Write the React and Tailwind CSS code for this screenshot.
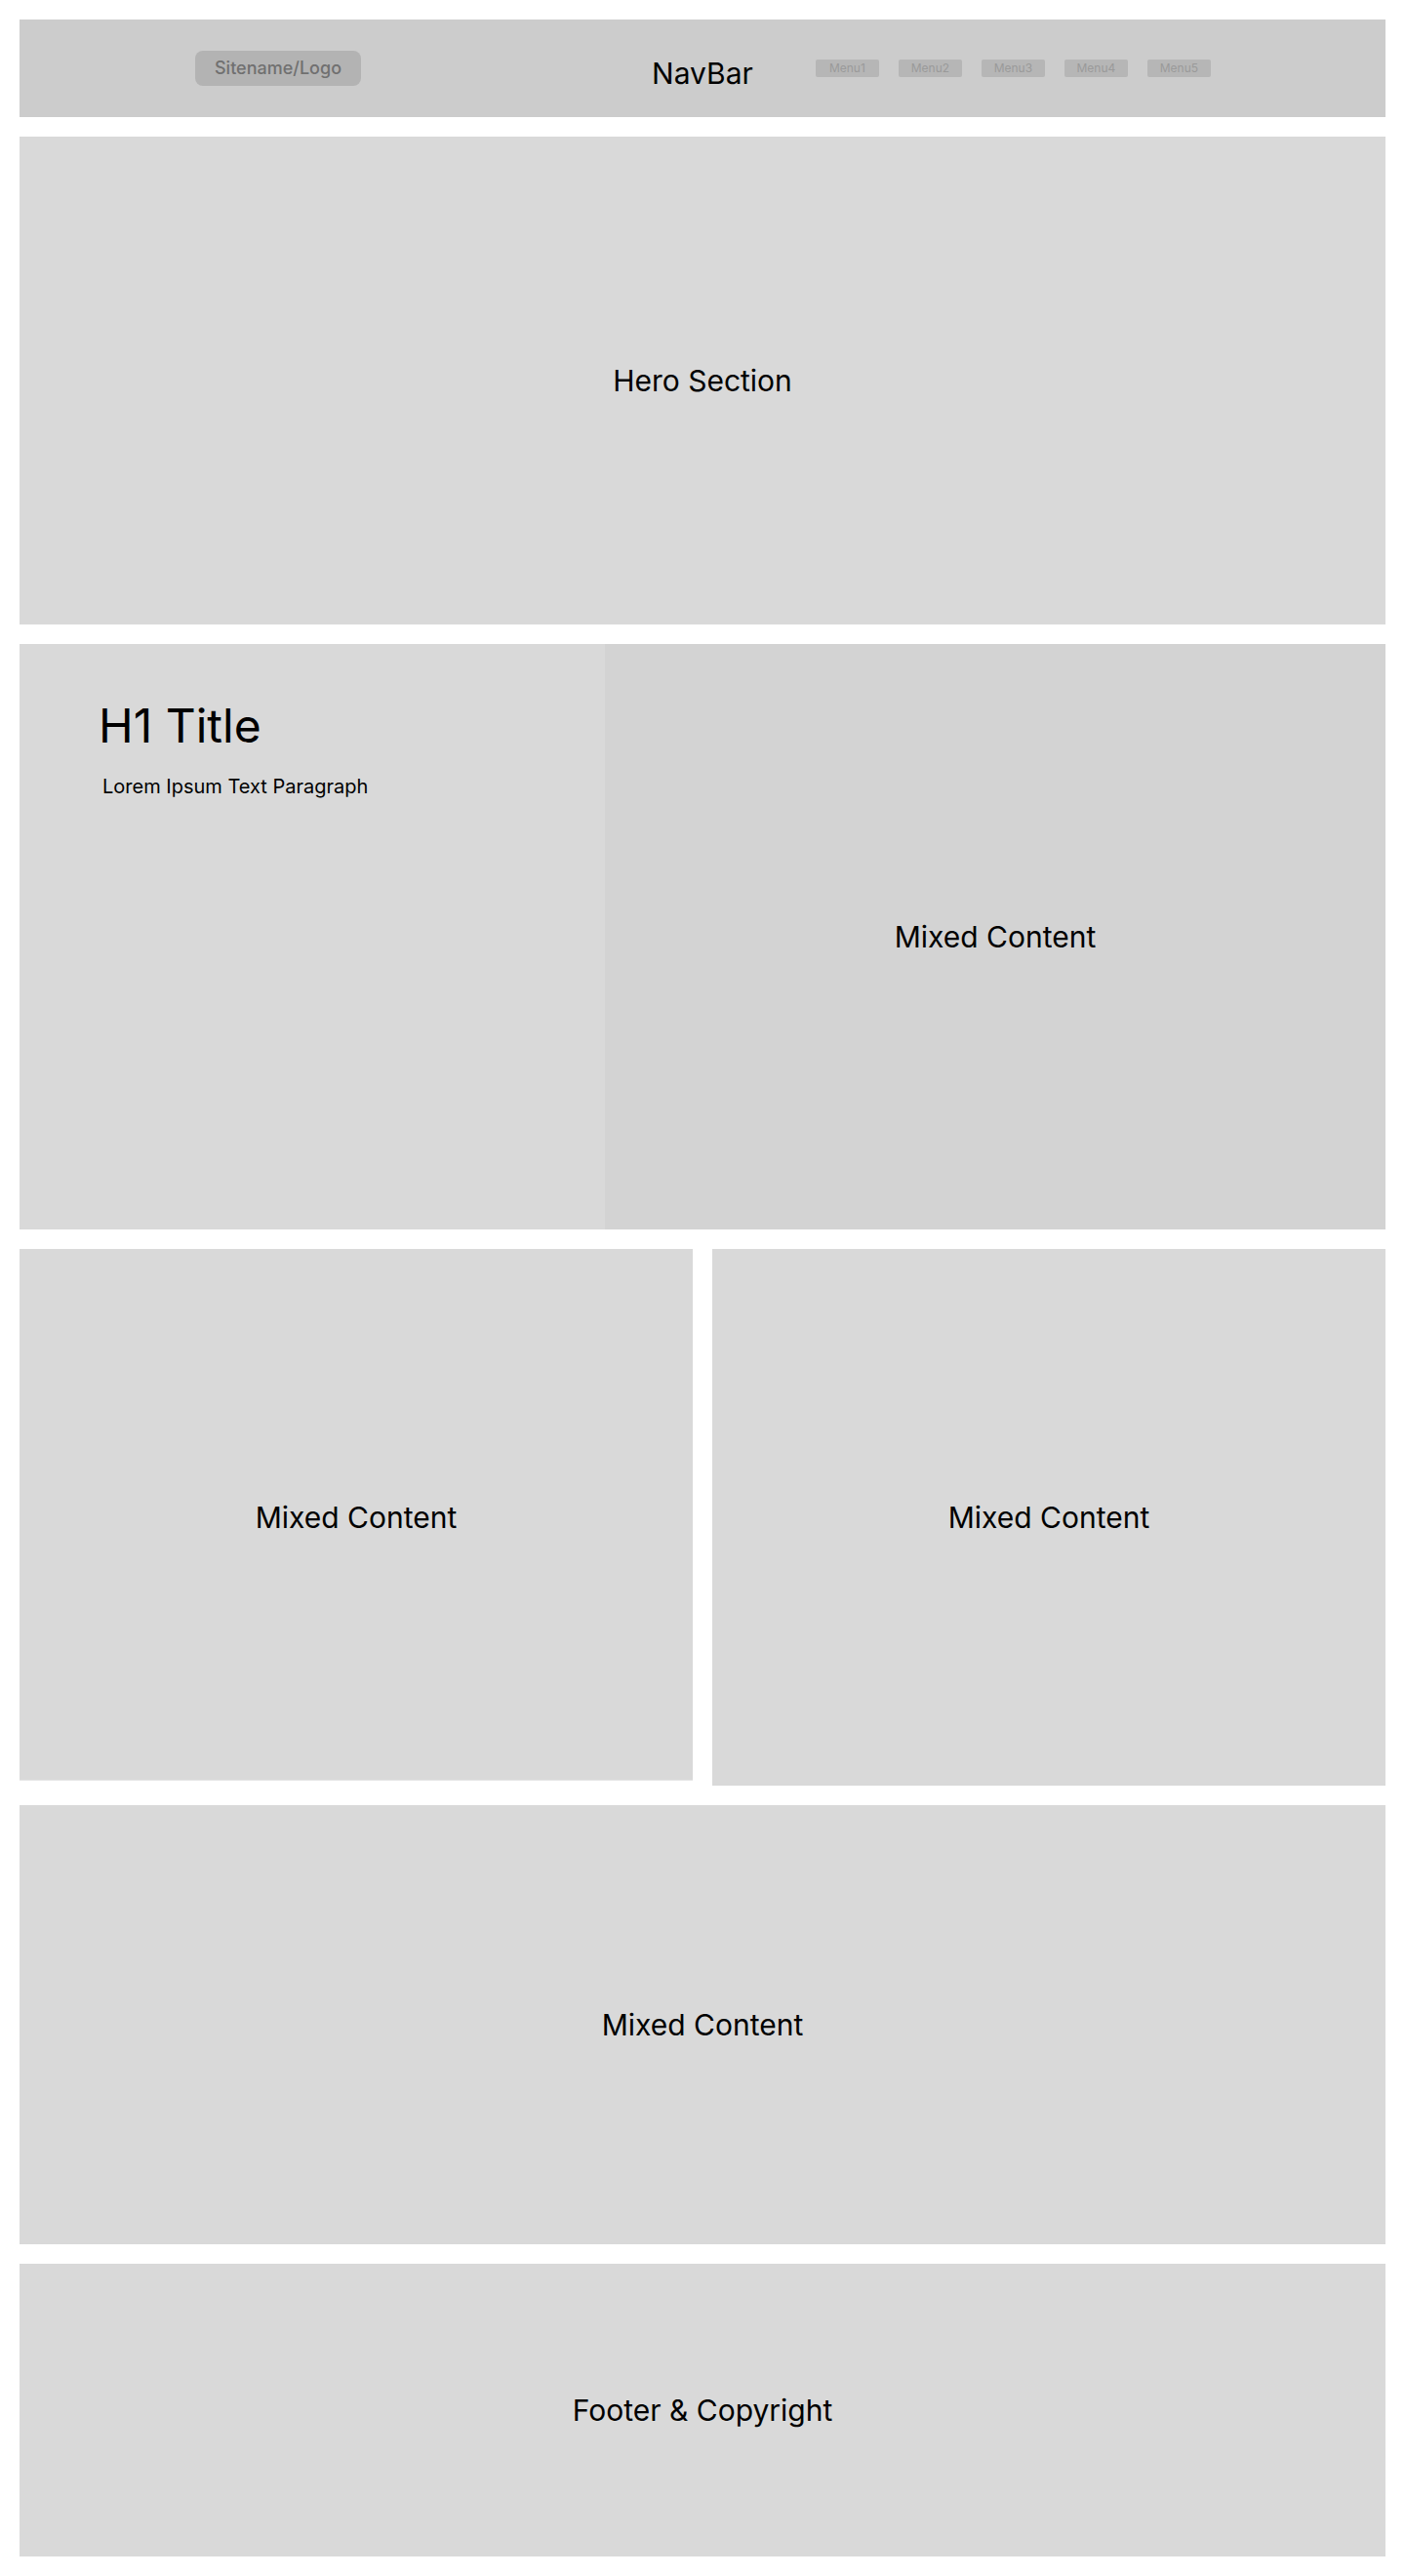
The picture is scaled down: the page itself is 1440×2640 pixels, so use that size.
import React from "react";

function Block({ className = "", label }) {
  return (
    <div className={`flex items-center justify-center ${className}`}>
      <span className="text-[30px] leading-none text-black">{label}</span>
    </div>
  );
}

export default function App() {
  const menus = ["Menu1", "Menu2", "Menu3", "Menu4", "Menu5"];
  return (
    <div className="min-h-[2640px] w-[1440px] bg-white p-5 flex flex-col gap-5 font-['Inter','Noto_Sans',sans-serif]">
      {/* NavBar */}
      <header className="h-[100px] bg-[#cccccc] grid grid-cols-[1fr_auto_1fr] items-center">
        <div className="pl-[180px] flex items-center">
          <div className="w-[170px] h-[36px] rounded-[8px] bg-[#b3b3b3] flex items-center justify-center">
            <span className="text-[18px] leading-none font-medium text-[#707070]">Sitename/Logo</span>
          </div>
        </div>
        <div className="mt-[9px] text-[30px] leading-none text-black">NavBar</div>
        <nav className="pl-[64px] flex items-center gap-5">
          {menus.map((m) => (
            <div
              key={m}
              className="w-[65px] h-[18px] rounded-[2px] bg-[#b6b6b6] flex items-center justify-center text-[12px] leading-none text-[#9a9a9a]"
            >
              {m}
            </div>
          ))}
        </nav>
      </header>

      {/* Hero */}
      <Block className="h-[500px] bg-[#d9d9d9]" label="Hero Section" />

      {/* H1 + Mixed */}
      <section className="h-[600px] grid grid-cols-[600px_1fr]">
        <div className="bg-[#d9d9d9] pt-[60px] flex flex-col">
          <h1 className="pl-[81px] text-[48px] leading-none font-normal text-black">H1 Title</h1>
          <p className="mt-[28px] pl-[85px] text-[20px] leading-none text-black">Lorem Ipsum Text Paragraph</p>
        </div>
        <Block className="bg-[#d3d3d3]" label="Mixed Content" />
      </section>

      {/* Two columns */}
      <section className="flex items-start gap-5">
        <Block className="w-[690px] h-[545px] pt-[6px] bg-[#d9d9d9] border-b border-[#e6e6e6]" label="Mixed Content" />
        <Block className="flex-1 h-[550px] bg-[#d9d9d9]" label="Mixed Content" />
      </section>

      {/* Wide mixed */}
      <Block className="h-[450px] bg-[#d9d9d9]" label="Mixed Content" />

      {/* Footer */}
      <Block className="h-[300px] bg-[#d9d9d9]" label="Footer & Copyright" />
    </div>
  );
}
